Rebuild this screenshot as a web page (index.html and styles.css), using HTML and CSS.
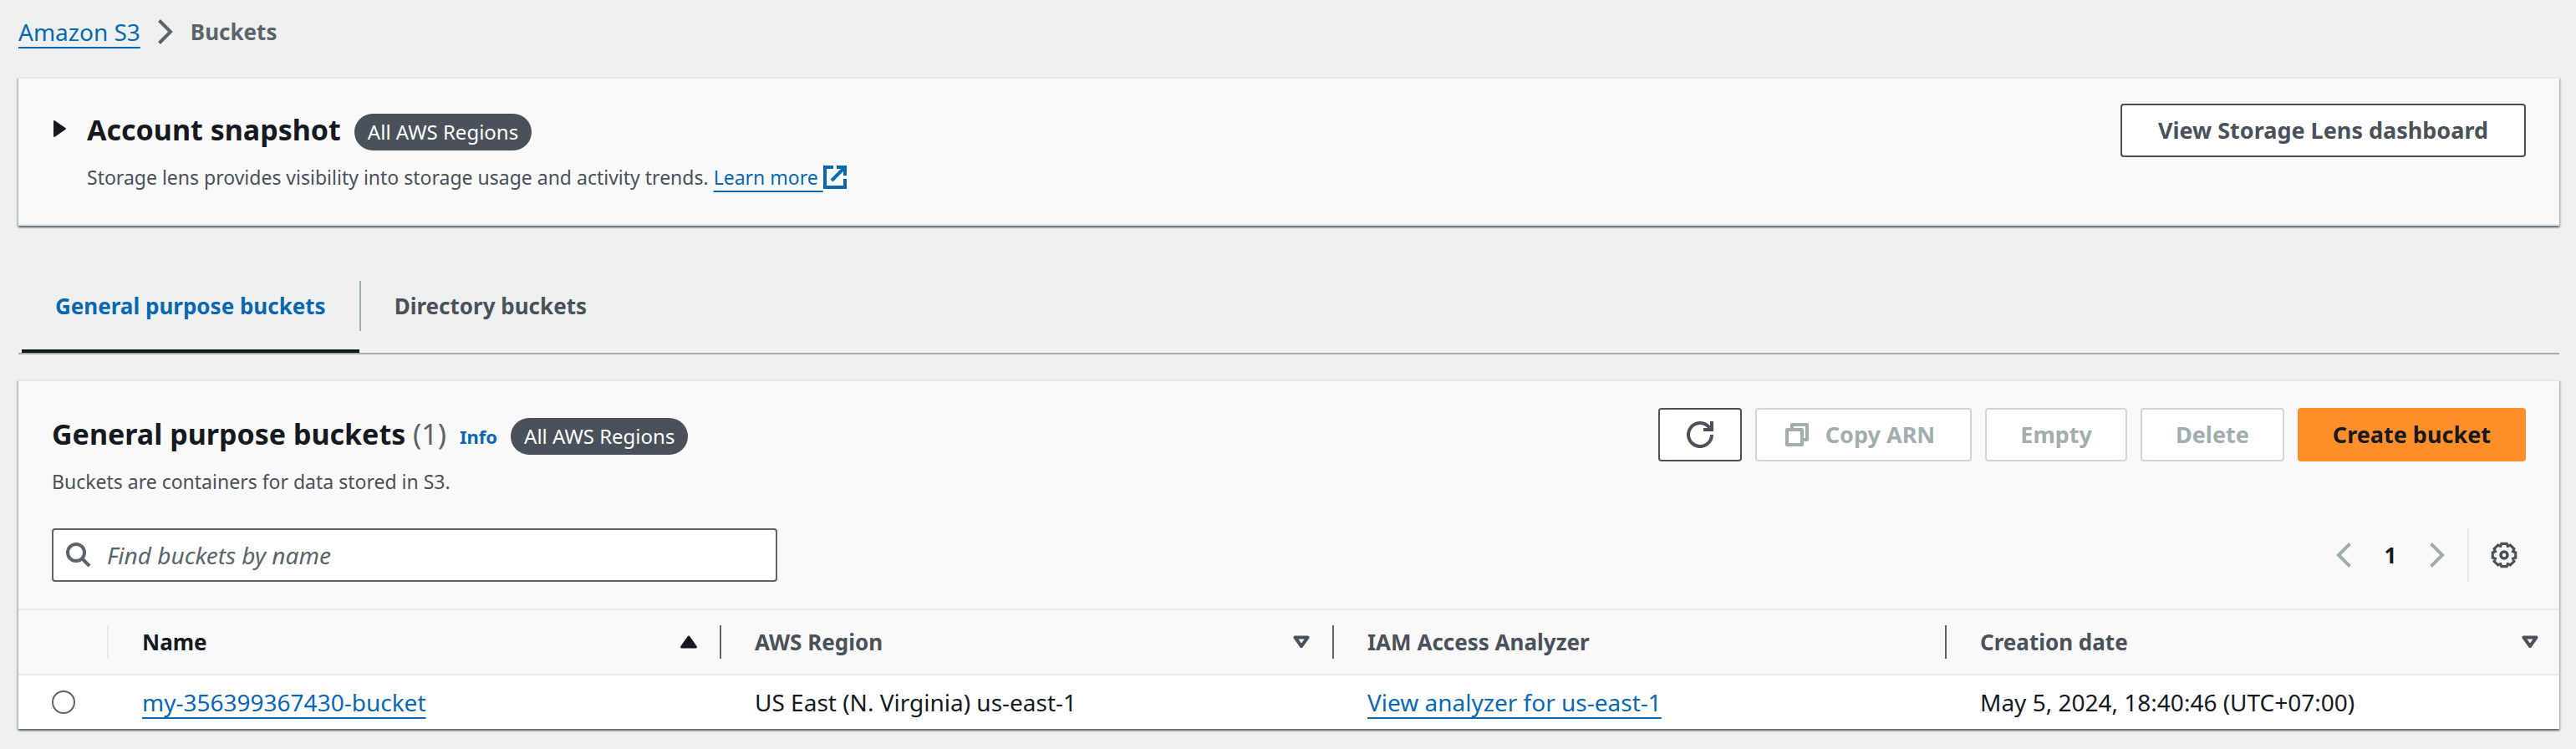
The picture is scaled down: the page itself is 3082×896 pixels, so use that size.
FILE: index.html
```html
<!DOCTYPE html>
<html lang="en">
<head>
<meta charset="utf-8">
<title>Buckets - Amazon S3</title>
<link rel="stylesheet" href="styles.css">
</head>
<body>
<nav class="breadcrumb" aria-label="Breadcrumb">
  <a class="link" href="#">Amazon S3</a>
  <svg class="crumb-sep" width="20" height="32" viewBox="0 0 20 32" aria-hidden="true"><path d="M2.500 2.500 L16 16 L2.500 29.500" fill="none" stroke="currentColor" stroke-width="4"/></svg>
  <span class="crumb-current">Buckets</span>
</nav>

<main>
  <section class="card snapshot">
    <div class="card-head">
      <button class="expander" type="button" aria-label="Expand account snapshot">
        <svg width="18" height="44" viewBox="0 0 18 44" aria-hidden="true"><path d="M3 11 L16 20 L3 29 Z" fill="currentColor" stroke="currentColor" stroke-width="2" stroke-linejoin="round"/></svg>
      </button>
      <div class="head-text">
        <div class="title-row">
          <h2 class="title">Account snapshot</h2>
          <span class="badge">All AWS Regions</span>
        </div>
        <p class="description">Storage lens provides visibility into storage usage and activity trends. <a class="link" href="#">Learn more&nbsp;<svg class="external" width="28" height="28" viewBox="0 0 28 28" aria-hidden="true"><path d="M12 2H2v24h24V16M16 2h10v10M25 3L10 18" fill="none" stroke="currentColor" stroke-width="4"/></svg></a></p>
      </div>
      <div class="actions">
        <button class="btn" type="button">View Storage Lens dashboard</button>
      </div>
    </div>
  </section>

  <div class="tabs" role="tablist">
    <button class="tab active" role="tab" aria-selected="true" type="button">General purpose buckets</button>
    <span class="tab-divider"></span>
    <button class="tab" role="tab" aria-selected="false" type="button">Directory buckets</button>
  </div>

  <section class="card buckets">
    <div class="card-head">
      <div class="head-text">
        <div class="title-row">
          <h2 class="title">General purpose buckets <span class="counter">(1)</span></h2>
          <a class="info" href="#">Info</a>
          <span class="badge">All AWS Regions</span>
        </div>
        <p class="description">Buckets are containers for data stored in S3.</p>
      </div>
      <div class="actions">
        <button class="btn btn-icon" type="button" aria-label="Refresh">
          <svg width="32" height="32" viewBox="0 0 32 32" aria-hidden="true"><path d="M30 16A14 14 0 1 1 27.500 8" fill="none" stroke="currentColor" stroke-width="4"/><path d="M30 0V10H20" fill="none" stroke="currentColor" stroke-width="4"/></svg>
        </button>
        <button class="btn btn-copy" type="button" disabled>
          <svg width="28" height="28" viewBox="0 0 28 28" aria-hidden="true"><path d="M2 8H20V26H2ZM8 8V2H26V20H20" fill="none" stroke="currentColor" stroke-width="4" stroke-linejoin="round"/></svg>
          Copy ARN
        </button>
        <button class="btn" type="button" disabled>Empty</button>
        <button class="btn" type="button" disabled>Delete</button>
        <button class="btn btn-primary" type="button">Create bucket</button>
      </div>
    </div>

    <div class="toolbar">
      <label class="search">
        <svg width="32" height="32" viewBox="0 0 32 32" aria-hidden="true"><circle cx="13" cy="13" r="10" fill="none" stroke="currentColor" stroke-width="4"/><path d="M20 20L29 29" stroke="currentColor" stroke-width="4"/></svg>
        <input type="search" placeholder="Find buckets by name" aria-label="Find buckets by name">
      </label>
      <div class="pager">
        <button class="page-arrow" type="button" disabled aria-label="Previous page"><svg width="32" height="32" viewBox="0 0 32 32" aria-hidden="true"><path d="M23.500 2.500L10 16L23.500 29.500" fill="none" stroke="currentColor" stroke-width="4"/></svg></button>
        <span class="page-number">1</span>
        <button class="page-arrow" type="button" disabled aria-label="Next page"><svg width="32" height="32" viewBox="0 0 32 32" aria-hidden="true"><path d="M8.500 2.500L22 16L8.500 29.500" fill="none" stroke="currentColor" stroke-width="4"/></svg></button>
        <span class="pager-divider"></span>
        <button class="settings" type="button" aria-label="Preferences"><svg width="32" height="32" viewBox="0 0 32 32" aria-hidden="true"><path d="M29.700 12.900V19.100L26.600 20.400L27.900 23.400L23.400 27.900L20.400 26.600L19.100 29.700H12.900L11.600 26.600L8.600 27.900L4.100 23.400L5.400 20.400L2.300 19.100V12.900L5.400 11.600L4.100 8.600L8.600 4.100L11.600 5.400L12.900 2.300H19.100L20.400 5.400L23.400 4.100L27.900 8.600L26.600 11.600Z" fill="none" stroke="currentColor" stroke-width="3.200"/><circle cx="16" cy="16" r="4" fill="none" stroke="currentColor" stroke-width="3.600"/></svg></button>
      </div>
    </div>

    <table class="table">
      <thead>
        <tr>
          <th class="select-col" scope="col"><div class="th"></div></th>
          <th scope="col"><div class="th sorted">Name<svg width="22" height="16" viewBox="0 0 22 16" aria-hidden="true"><path d="M11 2L19.500 14H2.500Z" fill="currentColor" stroke="currentColor" stroke-width="3" stroke-linejoin="round"/></svg></div></th>
          <th scope="col"><div class="th">AWS Region<svg width="22" height="16" viewBox="0 0 22 16" aria-hidden="true"><path d="M3.500 2.500H18.500L11 13Z" fill="none" stroke="currentColor" stroke-width="4" stroke-linejoin="round"/></svg></div></th>
          <th scope="col"><div class="th">IAM Access Analyzer</div></th>
          <th scope="col"><div class="th">Creation date<svg width="22" height="16" viewBox="0 0 22 16" aria-hidden="true"><path d="M3.500 2.500H18.500L11 13Z" fill="none" stroke="currentColor" stroke-width="4" stroke-linejoin="round"/></svg></div></th>
        </tr>
      </thead>
      <tbody>
        <tr>
          <td class="select-cell"><input class="radio" type="radio" name="bucket" aria-label="Select my-356399367430-bucket"></td>
          <td><a class="link" href="#">my-356399367430-bucket</a></td>
          <td>US East (N. Virginia) us-east-1</td>
          <td><a class="link" href="#">View analyzer for us-east-1</a></td>
          <td>May 5, 2024, 18:40:46 (UTC+07:00)</td>
        </tr>
      </tbody>
    </table>
  </section>
</main>
</body>
</html>
```
FILE: styles.css
```css
:root {
  --text: #16191f;
  --muted: #4a515a;
  --icon: #5a646d;
  --disabled: #a1aeae;
  --line: #e6eae9;
  --link: #0a68b1;
}

* {
  box-sizing: border-box;
}

body {
  margin: 0;
  padding: 18px 20px 22px 22px;
  background: #eff1f0;
  color: var(--text);
  font: 28px/40px "Noto Sans", "Open Sans", sans-serif;
}

button,
input {
  font: inherit;
  color: inherit;
}

button {
  padding: 0;
  border: 0;
  background: none;
}

svg {
  display: block;
  flex: none;
}

.link {
  color: var(--link);
  text-decoration: underline;
  text-decoration-thickness: 2px;
  text-decoration-skip-ink: none;
  text-underline-offset: 7px;
}

.breadcrumb {
  display: flex;
  align-items: center;
  gap: 20px;
  margin-bottom: 34px;
}

.crumb-sep {
  color: var(--icon);
}

.crumb-current {
  color: var(--icon);
  font-size: 26px;
  font-weight: 700;
}

/* Cards */
.card {
  border-top: 2px solid var(--line);
  background: #f9f9f9;
  box-shadow: 0 2px 2px rgba(0, 28, 36, 0.5), 2px 2px 2px rgba(0, 28, 36, 0.15), -2px 2px 2px rgba(0, 28, 36, 0.15);
}

.snapshot {
  padding: 30px 40px 40px;
  border-bottom: 2px solid var(--line);
}

.card-head {
  display: flex;
  align-items: flex-start;
}

.head-text {
  flex: 1;
  padding-top: 12px;
}

.title-row {
  display: flex;
  align-items: flex-start;
  gap: 16px;
}

.title {
  margin: 0;
  font-size: 34px;
  font-weight: 700;
  line-height: 38px;
}

.counter {
  color: var(--icon);
  font-weight: 400;
}

.info {
  color: var(--link);
  font-size: 22px;
  font-weight: 700;
  line-height: 44px;
  text-decoration: none;
}

.badge {
  padding: 0 16px;
  border-radius: 22px;
  background: var(--muted);
  color: #fff;
  font-size: 24px;
  line-height: 44px;
}

.description {
  margin: 16px 0 0;
  color: var(--muted);
  font-size: 23px;
  line-height: 32px;
}

.external {
  display: inline-block;
  vertical-align: -5px;
}

.expander {
  margin: 10px 24px 0 0;
}

/* Buttons */
.actions {
  display: flex;
  gap: 16px;
}

.btn {
  display: flex;
  align-items: center;
  height: 64px;
  padding: 0 43px;
  border: 2px solid var(--muted);
  border-radius: 4px;
  background: #fff;
  color: var(--muted);
  font-size: 27px;
  font-weight: 700;
}

.buckets .btn {
  padding: 0 40px;
}

.btn:disabled {
  border-color: #d0d8d6;
  color: var(--disabled);
}

.buckets .btn-icon {
  padding: 0 32px;
}

.buckets .btn-copy {
  gap: 20px;
  padding: 0 42px 0 34px;
}

.btn-primary {
  border-color: #ff8f2a;
  background: #ff8f2a;
  color: var(--text);
}

/* Tabs */
.tabs {
  display: flex;
  align-items: flex-start;
  margin: 66px 0 30px;
  padding-left: 4px;
  border-bottom: 2px solid var(--disabled);
}

.tab {
  padding: 0 40px 22px;
  border-bottom: 4px solid transparent;
  color: var(--muted);
  font-size: 26px;
  font-weight: 700;
  line-height: 60px;
}

.tab.active {
  border-color: #10161b;
  color: var(--link);
}

.tab-divider {
  width: 2px;
  height: 60px;
  background: var(--disabled);
}

/* Bucket list */
.buckets .card-head {
  padding: 32px 40px 0;
}

.toolbar {
  display: flex;
  align-items: center;
  justify-content: space-between;
  padding: 40px 40px 32px;
}

.search {
  display: flex;
  align-items: center;
  gap: 18px;
  width: 868px;
  height: 64px;
  padding: 0 14px;
  border: 2px solid var(--icon);
  border-radius: 4px;
  background: #fff;
  color: var(--icon);
}

.search input {
  flex: 1;
  min-width: 0;
  padding: 0;
  border: 0;
  outline: 0;
  background: none;
  color: var(--text);
  font-size: 28px;
}

.search input::placeholder {
  color: var(--icon);
  font-style: italic;
  opacity: 1;
}

.pager {
  display: flex;
  align-items: center;
  padding-right: 10px;
}

.page-arrow {
  color: var(--disabled);
}

.page-number {
  width: 80px;
  font-size: 26px;
  font-weight: 700;
  text-align: center;
}

.pager-divider {
  width: 2px;
  height: 64px;
  margin: 0 26px 0 20px;
  background: #e2e8e6;
}

.settings {
  color: var(--muted);
}

.table {
  width: 100%;
  border-collapse: separate;
  border-spacing: 0;
  table-layout: fixed;
}

.table th {
  padding: 18px 0;
  border-top: 2px solid var(--line);
  border-bottom: 2px solid var(--line);
  text-align: left;
}

.select-col {
  width: 108px;
}

.th {
  display: flex;
  align-items: center;
  justify-content: space-between;
  height: 40px;
  padding: 0 26px 0 40px;
  border-right: 2px solid var(--icon);
  color: var(--muted);
  font-size: 26px;
  font-weight: 700;
}

.th.sorted {
  color: var(--text);
}

.select-col .th {
  border-color: var(--line);
}

.table th:last-child .th {
  border-right: 0;
  padding-right: 24px;
}

.table td {
  height: 64px;
  padding: 0 0 0 40px;
  background: #fff;
}

.radio {
  display: block;
  width: 28px;
  height: 28px;
  margin: 0;
  border: 2px solid var(--icon);
  border-radius: 50%;
  appearance: none;
  background: #fff;
}
```
